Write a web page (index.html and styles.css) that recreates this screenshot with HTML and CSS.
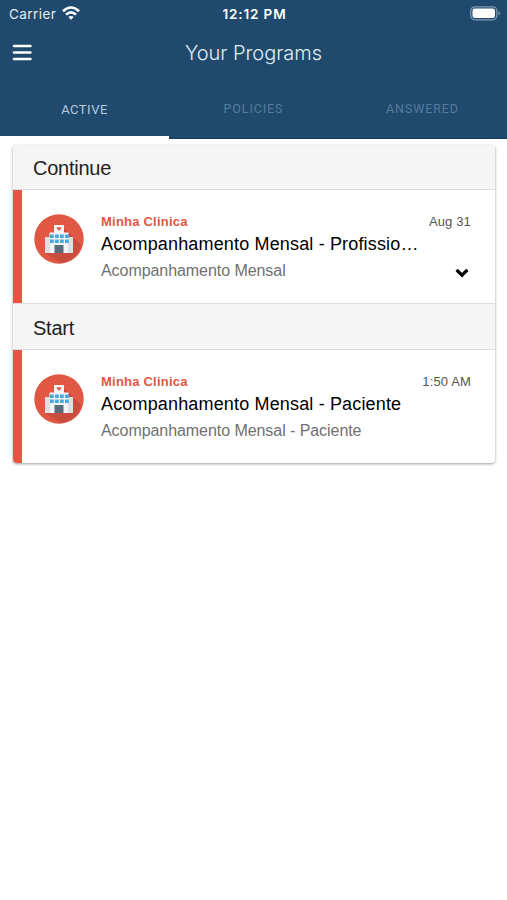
FILE: index.html
```html
<!DOCTYPE html>
<html lang="en">
<head>
<meta charset="utf-8">
<title>Your Programs</title>
<link rel="stylesheet" href="styles.css">
</head>
<body>
<svg width="0" height="0" class="defs" aria-hidden="true">
  <symbol id="hospital" viewBox="0 0 50 50">
    <circle cx="25" cy="25" r="24.700" fill="#e05744"/>
    <path d="M30 14 47 31A23 23 0 0 1 27 49L12 39.500z" fill="#c94d3e"/>
    <path d="M20 11h10v9H20z" fill="#f6f3f4"/>
    <path d="M15.500 18.500h19V39h-19z" fill="#f3f4f7"/>
    <path d="M11 23h5v16h-5zM34 23h5v16h-5z" fill="#dcdfe4"/>
    <path d="M25 16.700l-2.200-2.200q-.5-1.600 1-1.600.8 0 1.200.8.400-.8 1.200-.8 1.500 0 1 1.600z" fill="#e05744"/>
    <path d="M16 20.500h3.800v3.500H16zM21 20.500h3.800v3.500H21zM26 20.500h3.800v3.500H26zM31 20.500h3.800v3.500H31zM16 25.500h3.800v3.500H16zM21 25.500h3.800v3.500H21zM26 25.500h3.800v3.500H26zM31 25.500h3.800v3.500H31z" fill="#43a9da"/>
    <path d="M20.500 31h9v8h-9z" fill="#5b6b7b"/>
  </symbol>
</svg>
<header class="header">
  <div class="status">
    <div class="carrier"><span>Carrier</span>
      <svg class="wifi" width="18" height="14" viewBox="0 0 18 14" fill="none" stroke="#fff" stroke-width="2.600"><path d="M1 5.200Q9-2.200 17 5.200M4 8.600Q9 4 14 8.600"/><path d="M9 13.800 6.300 11Q9 8.800 11.700 11z" fill="#fff" stroke="none"/></svg>
    </div>
    <span class="clock">12:12 PM</span>
    <svg class="battery" width="31" height="15" viewBox="0 0 31 15"><rect x=".8" y=".8" width="26" height="13" rx="4" fill="none" stroke="#7f9ab2" stroke-width="1.200"/><rect x="2.500" y="2.500" width="22.500" height="9.600" rx="2.300" fill="#fff"/><path d="M28.500 5q3 2.300 0 4.600z" fill="#7f9ab2"/></svg>
  </div>
  <div class="toolbar">
    <svg class="menu" width="20" height="17" viewBox="0 0 20 17" stroke="#fff" stroke-width="2.600" stroke-linecap="round"><path d="M2 2h16.400M2 8.500h16.400M2 15h16.400"/></svg>
    <h1 class="title">Your Programs</h1>
  </div>
  <nav class="tabs">
    <div class="tab active"><span>ACTIVE</span></div>
    <div class="tab"><span>POLICIES</span></div>
    <div class="tab"><span>ANSWERED</span></div>
  </nav>
</header>
<main class="card">
  <h2 class="section">Continue</h2>
  <article class="item">
    <svg class="avatar"><use href="#hospital"/></svg>
    <div class="body">
      <div class="meta"><span class="clinic">Minha Clinica</span><time class="date">Aug 31</time></div>
      <div class="name">Acompanhamento Mensal - Profissio…</div>
      <div class="desc"><span>Acompanhamento Mensal</span><svg class="chevron" width="14" height="10" viewBox="0 0 14 10" fill="none" stroke="#000" stroke-width="3.200"><path d="M1.600 1.800 7 7.200 12.400 1.800"/></svg></div>
    </div>
  </article>
  <h2 class="section">Start</h2>
  <article class="item last">
    <svg class="avatar"><use href="#hospital"/></svg>
    <div class="body">
      <div class="meta"><span class="clinic">Minha Clinica</span><time class="date">1:50 AM</time></div>
      <div class="name">Acompanhamento Mensal - Paciente</div>
      <div class="desc"><span>Acompanhamento Mensal - Paciente</span></div>
    </div>
  </article>
</main>
</body>
</html>
```

FILE: styles.css
```css
* { box-sizing: border-box; }
body { margin: 0; min-height: 100vh; background: #fff; font-family: "Liberation Sans", Arial, sans-serif; }
.defs { display: block; }
.header { height: 139px; background: #1f4a6d; color: #fff; border-bottom: 1px solid #173c5b; }
.status { height: 28px; display: grid; grid-template-columns: 1fr auto 1fr; align-items: center; padding: 0 6px 0 9px; font-family: Inter, sans-serif; }
.carrier { display: flex; align-items: center; gap: 6px; font-size: 13.500px; letter-spacing: .45px; color: #e4ebf1; }
.wifi { margin-top: -2px; }
.clock { font-size: 13.500px; font-weight: 600; letter-spacing: .85px; margin-left: -1px; }
.battery { justify-self: end; margin-top: -2px; }
.toolbar { height: 48px; display: grid; grid-template-columns: 40px 1fr 40px; align-items: center; padding: 0 12px; }
.title { margin: 0; padding-top: 1px; text-align: center; font: 300 20px/28px Inter, sans-serif; letter-spacing: -.05px; color: #e2eaf1; }
.tabs { height: 62px; display: flex; }
.tab { flex: 1; display: flex; justify-content: center; padding-top: 24px; font: 400 12.500px/18px Roboto, sans-serif; letter-spacing: .9px; color: #557b9d; }
.tab.active { height: 63px; padding-top: 25px; font-size: 13px; letter-spacing: .5px; color: #b5cce0; border-bottom: 3px solid #fff; }
.card { margin: 6px 12px 0 13px; border-radius: 2px 2px 4px 4px; background: #fff; box-shadow: 0 1px 3px rgba(0,0,0,.4); }
.section { margin: 0; height: 45px; padding-left: 20px; background: #f5f5f5; border-bottom: 1px solid #ddd; font-size: 20px; font-weight: 400; letter-spacing: -.25px; line-height: 46px; color: #222; }
.item + .section { height: 46px; line-height: 48px; }
.item { height: 114px; display: flex; padding: 23px 24px 0 21px; background: linear-gradient(90deg, #e05744 9px, #fff 9px); border-bottom: 1px solid #ddd; }
.item.last { height: 113px; border-bottom: 0; border-radius: 0 0 4px 4px; }
.avatar { width: 50px; height: 50px; flex: none; margin: 1px 0 0 -.5px; }
.body { flex: 1; min-width: 0; margin-left: 17.500px; }
.meta { display: flex; justify-content: space-between; font-size: 13px; line-height: 18px; }
.clinic { font-weight: 700; letter-spacing: .22px; color: #e05744; }
.date { letter-spacing: .15px; color: #555; }
.name { margin-top: 1px; white-space: nowrap; font-size: 18px; letter-spacing: .16px; line-height: 24px; color: #000; }
.desc { display: flex; justify-content: space-between; align-items: center; margin-top: 3px; font-size: 16px; letter-spacing: -.06px; line-height: 24px; color: #707070; }
.chevron { margin: 4px 2px 0 0; }
```
